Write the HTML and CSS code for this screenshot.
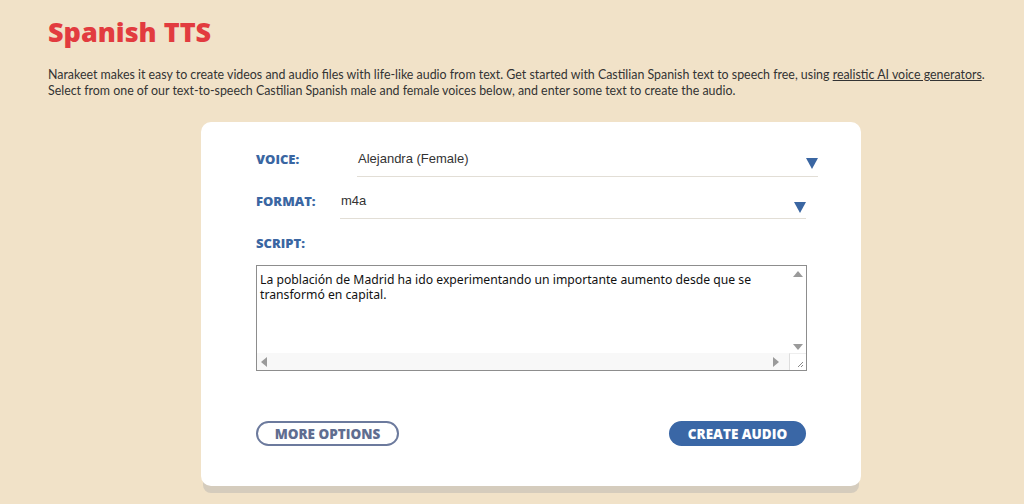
FILE: index.html
```html
<!DOCTYPE html>
<html>
<head>
  <title>Spanish TTS</title>
  <link rel="stylesheet" href="styles.css">
</head>
<body>
  <h1 class="title">Spanish TTS</h1>
  <p class="intro">Narakeet makes it easy to create videos and audio files with life-like audio from text. Get started with Castilian Spanish text to speech free, using <a href="#">realistic AI voice generators</a>.<br>Select from one of our text-to-speech Castilian Spanish male and female voices below, and enter some text to create the audio.</p>

  <div class="card">
    <div class="row voice-row">
      <label class="label voice-label">VOICE:</label>
      <div class="select voice-select">
        <span>Alejandra (Female)</span>
        <span class="arrow"></span>
      </div>
    </div>
    <div class="row">
      <label class="label format-label">FORMAT:</label>
      <div class="select format-select">
        <span>m4a</span>
        <span class="arrow"></span>
      </div>
    </div>
    <div class="row">
      <label class="label">SCRIPT:</label>
    </div>

    <div class="script-box">
      <textarea class="script" spellcheck="false">La población de Madrid ha ido experimentando un importante aumento desde que se transformó en capital.</textarea>
      <div class="vbar">
        <span class="tri up"></span>
        <span class="tri down"></span>
      </div>
      <div class="hbar">
        <span class="tri left"></span>
        <span class="tri right"></span>
      </div>
      <div class="corner">
        <svg width="8" height="8" viewBox="0 0 8 8"><path d="M7 2 L2 7 M7 5 L5 7" stroke="#888" stroke-width="1"/></svg>
      </div>
    </div>

    <div class="actions">
      <button class="btn-outline">MORE OPTIONS</button>
      <button class="btn-primary">CREATE AUDIO</button>
    </div>
  </div>
</body>
</html>
```

FILE: styles.css
```css
body {
  margin: 0;
  background-color: #f1e2c8;
  font-family: Lato, "Open Sans", sans-serif;
  color: #333;
  padding: 14px 48px 20px;
}
.title {
  margin: 0;
  font-family: "Open Sans", sans-serif;
  font-size: 27px;
  font-weight: 800;
  color: #e23b3f;
  line-height: 36px;
}
.intro {
  margin: 17px 0 0;
  font-size: 12.4px;
  line-height: 16px;
  color: #333;
  white-space: nowrap;
}
.intro a {
  color: #333;
}
.card {
  width: 550px;
  margin: 23px 0 0 153px;
  background: #fff;
  border-radius: 10px;
  padding: 20px 55px 40px;
  box-shadow: 0 9px 0 -2px #d5ccbd;
}
.row {
  display: flex;
  align-items: flex-end;
  height: 42px;
}
.voice-row {
  height: 35px;
}
.label {
  font-family: "Open Sans", sans-serif;
  font-weight: 800;
  font-size: 13px;
  color: #3a66a2;
  padding-bottom: 9px;
  flex-shrink: 0;
}
.voice-label {
  width: 101px;
}
.format-label {
  width: 84px;
}
.select {
  display: flex;
  justify-content: space-between;
  align-items: flex-end;
  border-bottom: 1px solid #e2ded6;
  font-family: "Liberation Sans", Arial, sans-serif;
  font-size: 13px;
  color: #333;
  padding-bottom: 10px;
  height: 18px;
  flex-shrink: 0;
  box-sizing: content-box;
}
.voice-select {
  width: 460px;
  padding-left: 1px;
}
.format-select {
  width: 465px;
  padding-left: 1px;
}
.voice-select .arrow {
  margin-bottom: -3px;
}
.format-select .arrow {
  margin-bottom: -5px;
}
.arrow {
  width: 0;
  height: 0;
  border-left: 6px solid transparent;
  border-right: 6px solid transparent;
  border-top: 11px solid #3a66a2;
}
.script-box {
  margin-top: 4px;
  width: 551px;
  height: 106px;
  border: 1px solid #8d8d8d;
  display: grid;
  grid-template-columns: 1fr 17px;
  grid-template-rows: 1fr 17px;
  box-sizing: border-box;
}
.script {
  border: none;
  outline: none;
  resize: none;
  overflow: hidden;
  font-family: "Noto Sans", sans-serif;
  font-size: 12.2px;
  line-height: 15px;
  color: #111;
  padding: 6px 3px 3px;
  margin: 0;
}
.vbar {
  background: #fff;
  display: flex;
  flex-direction: column;
  justify-content: space-between;
  align-items: center;
  padding: 5px 0 3px;
}
.hbar {
  background: #f8f8f8;
  display: flex;
  justify-content: space-between;
  align-items: center;
  padding: 0 10px 0 4px;
}
.corner {
  background: #fff;
  border-left: 1px solid #ddd;
  border-top: 1px solid #eee;
  display: flex;
  align-items: flex-end;
  justify-content: flex-end;
  padding: 0 2px 2px 0;
}
.tri {
  width: 0;
  height: 0;
}
.tri.up {
  border-left: 5px solid transparent;
  border-right: 5px solid transparent;
  border-bottom: 6px solid #9a9a9a;
}
.tri.down {
  border-left: 5px solid transparent;
  border-right: 5px solid transparent;
  border-top: 6px solid #9a9a9a;
}
.tri.left {
  border-top: 5px solid transparent;
  border-bottom: 5px solid transparent;
  border-right: 6px solid #9a9a9a;
}
.tri.right {
  border-top: 5px solid transparent;
  border-bottom: 5px solid transparent;
  border-left: 6px solid #9a9a9a;
}
.actions {
  display: flex;
  justify-content: space-between;
  margin-top: 50px;
}
button {
  font-family: "Open Sans", sans-serif;
  font-weight: 800;
  font-size: 13.5px;
  height: 25px;
  border-radius: 13px;
  cursor: pointer;
  padding: 0;
}
.btn-outline {
  width: 143px;
  background: #fff;
  border: 2px solid #6c7a9d;
  color: #5f6d90;
}
.btn-primary {
  width: 137px;
  background: #3a67a6;
  border: none;
  color: #fff;
}
```
